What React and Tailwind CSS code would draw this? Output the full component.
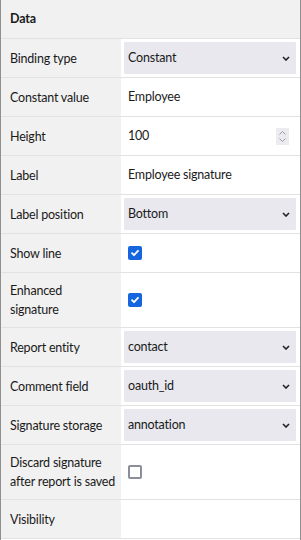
import { useState } from 'react';

const font = { fontFamily: 'Lato, "Noto Sans", sans-serif' };

function Chevron() {
  return (
    <svg className="h-[5px] w-[8px] text-[#222]" viewBox="0 0 8 5" fill="none" stroke="currentColor">
      <path strokeWidth={1.6} d="M1 1l3 3 3-3" />
    </svg>
  );
}

function SelectBox({ value }) {
  return (
    <div className="flex h-8 flex-1 items-center justify-between rounded-[1px] bg-[#e8e8ee] pl-1 pr-[6px] mr-1">
      <span>{value}</span>
      <Chevron />
    </div>
  );
}

function Spinner() {
  return (
    <div className="flex h-[17px] w-[13px] flex-col items-center justify-center gap-[3px] bg-[#ebebf0]">
      <svg className="h-[4px] w-[7px] text-[#9a9aa6]" viewBox="0 0 7 4" fill="none" stroke="currentColor">
        <path strokeWidth={1} d="M0.5 3.5l3-3 3 3" />
      </svg>
      <svg className="h-[4px] w-[7px] text-[#9a9aa6]" viewBox="0 0 7 4" fill="none" stroke="currentColor">
        <path strokeWidth={1} d="M0.5 0.5l3 3 3-3" />
      </svg>
    </div>
  );
}

function Checkbox({ checked }) {
  if (checked) {
    return (
      <div className="flex h-[14px] w-[14px] items-center justify-center rounded-[2px] bg-[#1565df]">
        <svg className="h-[10px] w-[10px] text-white" viewBox="0 0 10 10" fill="none" stroke="currentColor">
          <path strokeWidth={1.8} strokeLinecap="round" strokeLinejoin="round" d="M2 5.2l2 2L8 2.8" />
        </svg>
      </div>
    );
  }
  return <div className="h-[14px] w-[14px] rounded-[2px] border-2 border-[#8c8c9a] bg-white" />;
}

function Row({ label, children }) {
  const lines = label.split('\n');
  const tall = lines.length > 1;
  return (
    <div className="flex border-b border-[#e2e2e2]">
      <div className={`flex w-[120px] shrink-0 flex-col justify-center bg-[#f1f1f1] pl-[9px] leading-[19px] ${tall ? 'min-h-[54px] py-2' : 'min-h-[38px]'}`}>
        {lines.map((l) => (
          <span key={l} className="whitespace-nowrap">{l}</span>
        ))}
      </div>
      <div className="flex flex-1 items-center pl-[3px] bg-white">
        {children}
      </div>
    </div>
  );
}

function Text({ children }) {
  return <span className="pl-1">{children}</span>;
}

export default function App() {
  const [rows] = useState([
    { label: 'Binding type', kind: 'select', value: 'Constant' },
    { label: 'Constant value', kind: 'text', value: 'Employee' },
    { label: 'Height', kind: 'number', value: '100' },
    { label: 'Label', kind: 'text', value: 'Employee signature' },
    { label: 'Label position', kind: 'select', value: 'Bottom' },
    { label: 'Show line', kind: 'check', value: true },
    { label: 'Enhanced\nsignature', kind: 'check', value: true },
    { label: 'Report entity', kind: 'select', value: 'contact' },
    { label: 'Comment field', kind: 'select', value: 'oauth_id' },
    { label: 'Signature storage', kind: 'select', value: 'annotation' },
    { label: 'Discard signature\nafter report is saved', kind: 'check', value: false },
    { label: 'Visibility', kind: 'empty' },
  ]);

  return (
    <div className="h-[540px] w-[301px] overflow-hidden border-x border-[#8f8f8f] bg-white text-[12.5px] tracking-[-0.2px] text-[#1a1a1a]" style={font}>
      <div className="flex h-[39px] items-center border-b border-[#e2e2e2] bg-[#f1f1f1] pl-[9px] font-bold">
        Data
      </div>
      {rows.map((r) => (
        <Row key={r.label} label={r.label}>
          {r.kind === 'select' && <SelectBox value={r.value} />}
          {r.kind === 'text' && <Text>{r.value}</Text>}
          {r.kind === 'number' && (
            <div className="flex flex-1 items-center justify-between pr-[11px]">
              <Text>{r.value}</Text>
              <Spinner />
            </div>
          )}
          {r.kind === 'check' && (
            <div className="pl-1">
              <Checkbox checked={r.value} />
            </div>
          )}
        </Row>
      ))}
    </div>
  );
}
